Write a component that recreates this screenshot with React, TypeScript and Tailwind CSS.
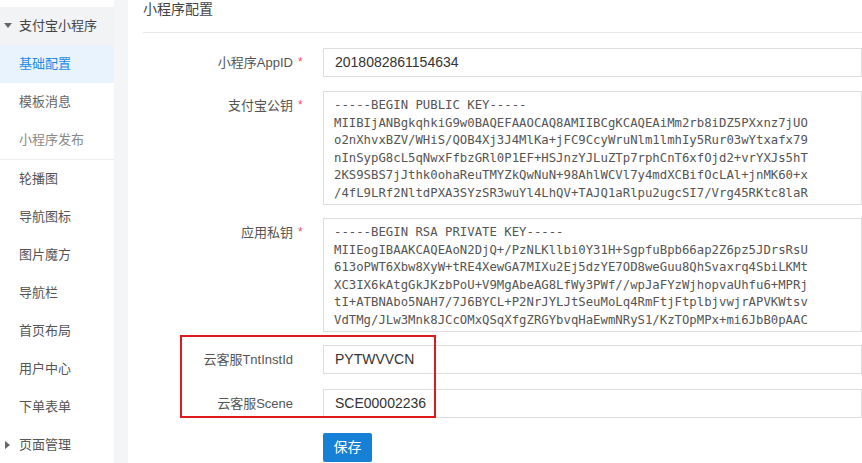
import React from "react";

const sans = "font-['Liberation_Sans','Noto_Sans_CJK_SC',sans-serif]";

const publicKey = [
  "-----BEGIN PUBLIC KEY-----",
  "MIIBIjANBgkqhkiG9w0BAQEFAAOCAQ8AMIIBCgKCAQEAiMm2rb8iDZ5PXxnz7jUO",
  "o2nXhvxBZV/WHiS/QOB4Xj3J4MlKa+jFC9CcyWruNlm1lmhIy5Rur03wYtxafx79",
  "nInSypG8cL5qNwxFfbzGRl0P1EF+HSJnzYJLuZTp7rphCnT6xfOjd2+vrYXJs5hT",
  "2KS9SBS7jJthk0ohaReuTMYZkQwNuN+98AhlWCVl7y4mdXCBifOcLAl+jnMK60+x",
  "/4fL9LRf2NltdPXA3SYzSR3wuYl4LhQV+TAJQ1aRlpu2ugcSI7/Vrg45RKtc8laR",
  "ZhIAZ+3tNl2kLSTAkWdlNNkxtrtE2GbuQ7lEY8sbHt/fRBB3waN8eBwmnZQCmkdB",
];

const privateKey = [
  "-----BEGIN RSA PRIVATE KEY-----",
  "MIIEogIBAAKCAQEAoN2DjQ+/PzNLKllbi0Y31H+SgpfuBpb66ap2Z6pz5JDrsRsU",
  "613oPWT6Xbw8XyW+tRE4XewGA7MIXu2Ej5dzYE7OD8weGuu8QhSvaxrq4SbiLKMt",
  "XC3IX6kAtgGkJKzbPoU+V9MgAbeAG8LfWy3PWf//wpJaFYzWjhopvaUhfu6+MPRj",
  "tI+ATBNAbo5NAH7/7J6BYCL+P2NrJYLJtSeuMoLq4RmFtjFtplbjvwjrAPVKWtsv",
  "VdTMg/JLw3Mnk8JCcOMxQSqXfgZRGYbvqHaEwmNRyS1/KzTOpMPx+mi6JbB0pAAC",
  "EqveNNuQ7A1Q9iuw/Wetr+i7Dk09Ea7C0lQ2TcF1A3A1cTDAfwSMzeVWAhsJKx8xA",
];

const subItems = ["基础配置", "模板消息", "小程序发布"];
const navItems = ["轮播图", "导航图标", "图片魔方", "导航栏", "首页布局", "用户中心", "下单表单"];

function Sidebar() {
  return (
    <div className={`w-[114px] shrink-0 bg-white pt-[7px] text-[13px] ${sans}`}>
      <div className="relative flex h-[38px] items-center bg-[#f2f3f5] pl-[19px] text-[#444]">
        <span className="absolute left-[4px] top-[16px] h-0 w-0 border-x-[4px] border-t-[5px] border-x-transparent border-t-[#666]" />
        支付宝小程序
      </div>
      {subItems.map((s, i) => (
        <div
          key={s}
          className={`flex h-[38px] items-center pl-[19px] ${
            i === 0 ? "bg-[#e8f3fd] text-[#1a8ae6]" : i === 2 ? "text-[#888]" : "text-[#666]"
          }`}
        >
          {s}
        </div>
      ))}
      <div className="h-px bg-[#eeeeee]" />
      {navItems.map((s) => (
        <div key={s} className="flex h-[38px] items-center pl-[19px] text-[#555]">
          {s}
        </div>
      ))}
      <div className="relative flex h-[38px] items-center pl-[19px] text-[#555]">
        <span className="absolute left-[5px] top-[15px] h-0 w-0 border-y-[4px] border-l-[5px] border-y-transparent border-l-[#666]" />
        页面管理
      </div>
    </div>
  );
}

function Label({ text, required, className = "" }: { text: string; required?: boolean; className?: string }) {
  return (
    <div className={`flex w-[180px] shrink-0 ${className}`}>
      <div className="w-[150px] text-right text-[13px] text-[#555]">{text}</div>
      <div className="w-[30px] pl-[5px] text-[12px] text-[#f0506e]">{required ? "*" : ""}</div>
    </div>
  );
}

function KeyBox({ lines, h }: { lines: string[]; h: string }) {
  return (
    <div
      className={`w-[600px] ${h} overflow-hidden border border-[#dddddd] px-[10px] pt-[5px] whitespace-pre font-['DejaVu_Sans_Mono',monospace] text-[12.3px] leading-[17.5px] text-[#555]`}
    >
      {lines.join("\n")}
    </div>
  );
}

function TextInput({ value }: { value: string }) {
  return (
    <div className="flex h-[29px] w-[600px] items-center border border-[#dddddd] px-[11px] text-[14px] text-[#333]">
      {value}
    </div>
  );
}

export default function App() {
  return (
    <div className={`flex h-[463px] w-[862px] overflow-hidden bg-white ${sans}`}>
      <Sidebar />
      <div className="w-[14px] shrink-0 bg-[#f4f5f7]" />
      <div className="min-w-0 flex-1 overflow-hidden bg-white pl-[15px]">
        <div className="h-[33px] border-b border-[#e8e8e8] text-[14px] leading-[18px] text-[#444]">小程序配置</div>

        <div className="mt-[15px] flex items-center">
          <Label text="小程序AppID" required />
          <TextInput value="2018082861154634" />
        </div>

        <div className="mt-[14px] flex">
          <Label text="支付宝公钥" required className="pt-[5px]" />
          <KeyBox lines={publicKey} h="h-[114px]" />
        </div>

        <div className="mt-[13px] flex">
          <Label text="应用私钥" required className="pt-[5px]" />
          <KeyBox lines={privateKey} h="h-[114px]" />
        </div>

        <div className="relative mt-[13px]">
          <div className="flex items-center">
            <Label text="云客服TntInstId" />
            <TextInput value="PYTWVVCN" />
          </div>
          <div className="mt-[15px] flex items-center">
            <Label text="云客服Scene" />
            <TextInput value="SCE00002236" />
          </div>
          <div className="pointer-events-none absolute left-[37px] top-[-10px] h-[83px] w-[256px] border-2 border-[#e0191c]" />
        </div>

        <div className="mt-[15px] pl-[180px]">
          <button className="h-[29px] w-[49px] rounded-[2px] bg-[#1680d7] text-[14px] text-white">保存</button>
        </div>
      </div>
    </div>
  );
}
